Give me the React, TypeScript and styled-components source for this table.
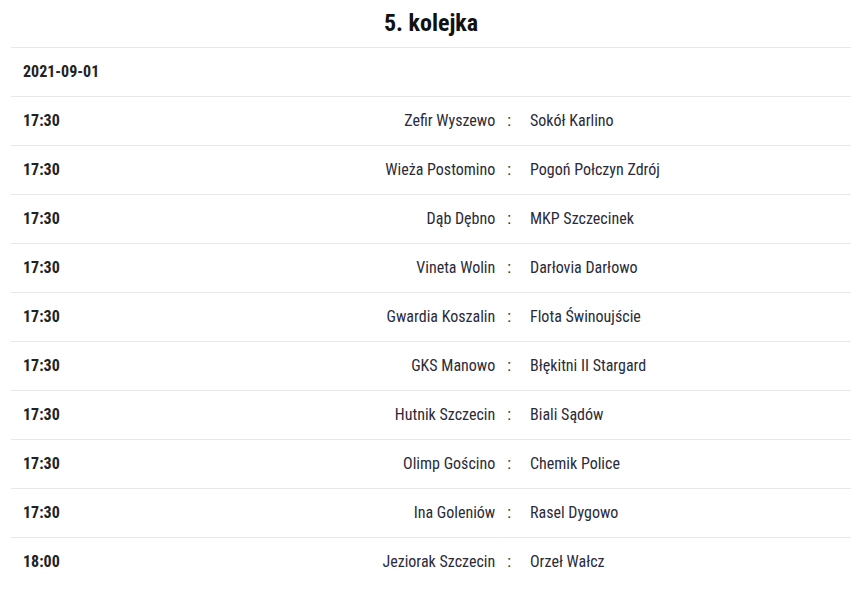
import React from 'react';
import styled, { createGlobalStyle } from 'styled-components';

const GlobalStyle = createGlobalStyle`
  body {
    margin: 0;
    background: #fff;
    font-family: "Roboto Condensed", "Liberation Sans Narrow", Roboto, sans-serif;
  }
`

const MATCHES = [
  { time: '17:30', home: 'Zefir Wyszewo', away: 'Sokół Karlino' },
  { time: '17:30', home: 'Wieża Postomino', away: 'Pogoń Połczyn Zdrój' },
  { time: '17:30', home: 'Dąb Dębno', away: 'MKP Szczecinek' },
  { time: '17:30', home: 'Vineta Wolin', away: 'Darłovia Darłowo' },
  { time: '17:30', home: 'Gwardia Koszalin', away: 'Flota Świnoujście' },
  { time: '17:30', home: 'GKS Manowo', away: 'Błękitni II Stargard' },
  { time: '17:30', home: 'Hutnik Szczecin', away: 'Biali Sądów' },
  { time: '17:30', home: 'Olimp Gościno', away: 'Chemik Police' },
  { time: '17:30', home: 'Ina Goleniów', away: 'Rasel Dygowo' },
  { time: '18:00', home: 'Jeziorak Szczecin', away: 'Orzeł Wałcz' },
]

function App() {
  return (
    <>
      <GlobalStyle />
      <StyledWrap>
        <StyledTitle>5. kolejka</StyledTitle>
        <StyledDateRow>2021-09-01</StyledDateRow>
        {MATCHES.map((m, i) => (
          <StyledRow key={i}>
            <StyledTime>{m.time}</StyledTime>
            <StyledHome>{m.home}</StyledHome>
            <StyledColon>:</StyledColon>
            <StyledAway>{m.away}</StyledAway>
          </StyledRow>
        ))}
      </StyledWrap>
    </>
  )
}

const StyledWrap = styled.div`
  margin: 0 8px 0 11px;
  color: #222;
`

const StyledTitle = styled.h2`
  margin: 0;
  height: 47px;
  line-height: 46px;
  text-align: center;
  font-size: 24px;
  font-weight: 700;
  color: #111;
`

const StyledDateRow = styled.div`
  height: 48px;
  line-height: 47px;
  padding: 0 12px;
  border-top: 1px solid #e8e8e8;
  font-size: 16px;
  font-weight: 700;
`

const StyledRow = styled.div`
  display: grid;
  grid-template-columns: 120px 1fr auto 309px;
  align-items: center;
  box-sizing: border-box;
  height: 49px;
  padding: 0 12px 1px;
  border-top: 1px solid #e8e8e8;
  font-size: 16px;
  color: #2b2b38;
`

const StyledTime = styled.div`
  font-weight: 700;
  font-size: 16px;
  color: #222;
`

const StyledHome = styled.div`
  text-align: right;
`

const StyledColon = styled.div`
  padding: 0 19px 0 12px;
`

const StyledAway = styled.div`
  text-align: left;
`

export default App
